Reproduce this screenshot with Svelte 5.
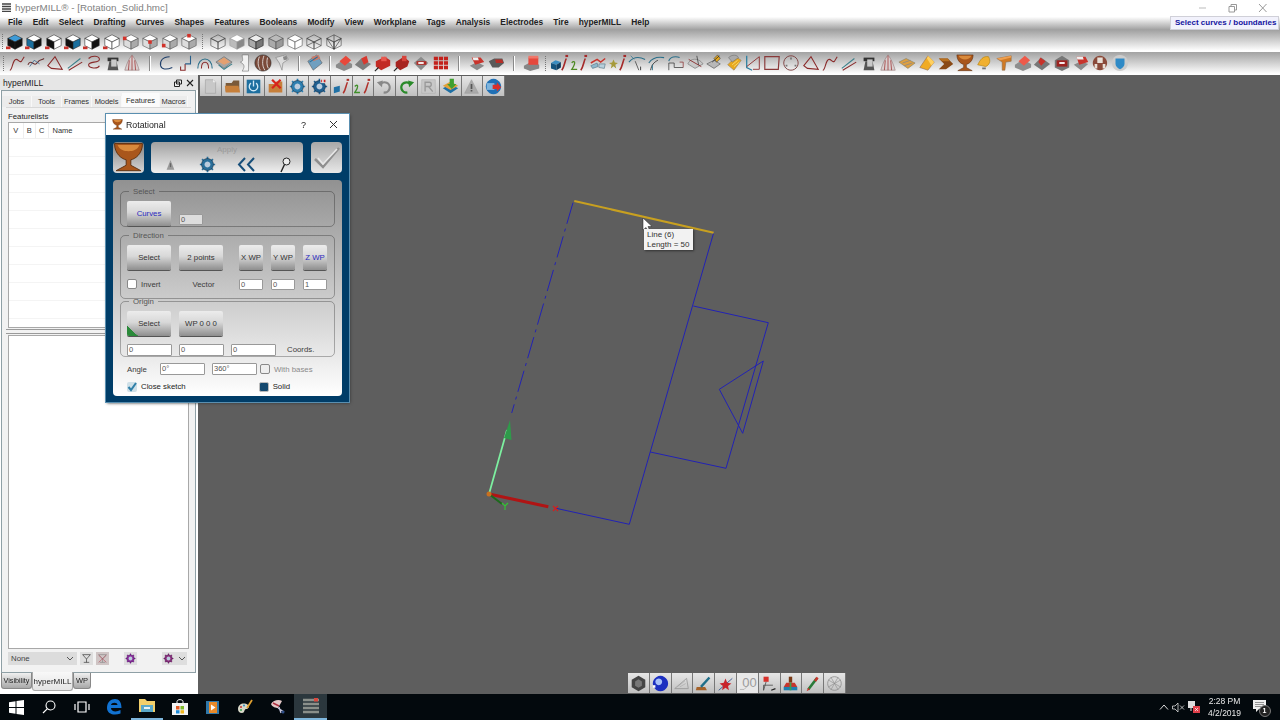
<script lang="ts">
	type Part = [string, string, string?, number?];

	const L = (d: string, c = '#8a2b2b', w = 1.2): Part => [d, 'none', c, w];
	const F = (d: string, c: string, s = 'none', w = 0.6): Part => [d, c, s, w];

	const cube = (t: string, l: string, r: string, e = '#222'): Part[] => [
		F('M10 2L18 6L10 10L2 6Z', t, e),
		F('M2 6L10 10V18L2 14Z', l, e),
		F('M18 6L10 10V18L18 14Z', r, e)
	];
	const view = (t: string, l: string, r: string): Part[] => [
		...cube(t, l, r),
		F('M0 15h5v3H0z', '#c8332c')
	];
	const corner = (x: number, y: number): Part[] => [
		...cube('#fff', '#ddd', '#aaa', '#444'),
		F(`M${x - 2} ${y - 2}h4v4h-4z`, '#d2322a')
	];
	const solid = (a: string, b: string): Part[] => [
		F('M1 12L10 6L19 11V15L10 19L1 15Z', b),
		F('M5 8L12 2L18 7L11 13Z', a)
	];
	const info = (tag: Part[], c = '#a52a2a'): Part[] => [...tag, L('M12 18C15 14 15 9 17 5', c, 1.8), F('M16 1h3v2.4h-3z', c)];
	const goblet: Part[] = [
		F('M1 1H19C19 8 14 11 11.500 11.500V15L18 18.500H2L8.500 15V11.500C6 11 1 8 1 1Z', '#a9561b', '#5b2f10'),
		F('M3 2H17C16 5 13 6 10 6C7 6 4 5 3 2Z', '#d98a3c')
	];
	const grid: Part[] = [0, 1, 2].flatMap((r) =>
		[0, 1, 2].map((c): Part => F(`M${2 + c * 5.6} ${3 + r * 5}h4.6v4h-4.6z`, '#c3211c'))
	);
	const gear = (c: string): Part[] => [
		L('M10 1V19M1 10H19M3.6 3.6L16.4 16.4M16.4 3.6L3.6 16.4', c, 2),
		F('M10 3A7 7 0 1 1 9.9 3Z', c, '#123'),
		F('M10 6.5A3.5 3.5 0 1 1 9.9 6.5Z', '#bcd')
	];

	const sep = (w: number, dotted = false) => ({ w, sep: true, dotted, g: [] as Part[] });
	const tool = (g: Part[]) => ({ w: 19.3, sep: false, dotted: false, g });

	const bar_one = [
		sep(5.5, true),
		...[
			view('#3d9bd8', '#111', '#111'),
			view('#fff', '#1a6f9e', '#111'),
			view('#fff', '#111', '#fff'),
			view('#fff', '#111', '#1a6f9e'),
			view('#fff', '#fff', '#111'),
			view('#fff', '#fff', '#fff'),
			corner(3, 6),
			corner(10, 10),
			corner(3, 14),
			corner(10, 3)
		].map(tool),
		sep(9.7, true),
		...[
			cube('none', 'none', 'none', '#333'),
			cube('#fff', '#bbb', '#888', '#999'),
			cube('#eee', '#aaa', '#777', '#111'),
			cube('#bbb', '#aaa', '#999', '#444'),
			cube('#fff', '#fff', '#fff', '#444'),
			[...cube('none', 'none', 'none', '#333'), L('M2 14L10 10L18 14', '#333', 0.7)],
			[...cube('none', 'none', 'none', '#333'), L('M2 6L10 18L18 6M10 2V18', '#333', 0.7)]
		].map(tool)
	];

	const bar_two = [
		sep(7, true),
		...[
			[L('M2 18C5 18 5 6 9 6C12 6 12 10 15 8L18 3')],
			[L('M1 12C5 4 8 16 12 9C14 6 16 7 19 5', '#6a3030'), L('M3 14L8 7L14 11', '#2a5f8a', 0.8)],
			[L('M2 13L10 3L18 17L6 16Z')],
			[L('M2 16L16 5', '#3a7f8a'), L('M3 18L18 9', '#8a2b2b')],
			[L('M4 5C8 1 16 2 16 6C16 10 4 8 4 12C4 16 14 17 16 13')],
			[F('M4 4H16V8H4z', '#333'), F('M6 8H14L16 18H4Z', '#555'), F('M8 6H14V14H8z', '#c9c9c9')],
			[F('M10 1C14 6 17 14 18 18H2C3 14 6 6 10 1Z', '#d9cfcf', '#8a6a6a'), L('M10 2V18M7 7L6 18M13 7L14 18', '#9a2b2b', 0.8)],
		].map(tool),
		sep(14.7),
		...[
			[L('M14 3C6 3 3 8 4 13C5 17 10 18 17 15', '#1f3f6a')],
			[L('M4 14V18H9V11', '#8a2b2b'), L('M9 11H15V2', '#2a5f8a')],
			[L('M2 16C2 2 18 2 18 16', '#2a6f8a'), L('M6 16C6 7 14 7 14 16', '#8a2b2b')],
			[F('M1 9L10 3L19 9L10 16Z', '#a5a5a5', '#555'), F('M3 8L10 4L17 9L10 12Z', '#e4a070'), L('M4 12L10 17L19 11', '#3a7f8a')],
			[F('M8 1H15V19H8C11 14 11 12 6 9C10 8 8 5 8 1Z', '#f2f2f2', '#666')],
			[F('M10 1A9 9 0 1 1 9.9 1Z', '#7a4a3a', '#222'), L('M6 3C4 8 4 13 7 18M11 2C9 8 9 13 12 18M15 4C14 8 14 13 16 16', '#eee', 0.9)],
			[F('M3 4L14 1L17 6L11 10L10 18L7 10Z', '#dcdcdc', '#777'), F('M11 3L15 2L16 6L12 7Z', '#888')],
		].map(tool),
		sep(13.7),
		tool([F('M2 8L12 1L18 10L8 18Z', '#6f9fc0', '#555'), F('M6 3L14 1L16 5L8 8Z', '#c77b6a'), L('M4 9L13 3', '#2a6f9a')]),
		sep(9.7),
		...[
			solid('#e8483a', '#8b8b8b'),
			[F('M1 12L8 5L19 11L10 18Z', '#7d7d7d'), F('M8 5L14 2L16 9L11 12Z', '#d8392f')],
			[F('M2 8L12 3L18 7V13L8 18L2 14Z', '#c22b25'), F('M8 3H14V8H8z', '#e8584f'), L('M1 19L5 15', '#222')],
			[F('M3 9L12 3L18 8L16 14L8 18L3 14Z', '#a72420'), F('M10 2H15V8H10z', '#d8443c'), L('M1 19L5 15', '#222')],
			[F('M2 10L10 3L18 10L10 18Z', '#8b8b8b'), F('M5 8H16V12H5z', '#b02a25'), F('M7 9H13V11H7z', '#fff')],
			grid
		].map(tool),
		sep(16.7),
		...[
			[F('M2 13L10 9L18 13L10 18Z', '#8b8b8b'), F('M4 4H14L18 9L8 12Z', '#c8342c'), F('M5 4H11L12 7H6Z', '#eee')],
			[F('M2 8L8 5H17L19 10L13 15H6Z', '#5a5a5a'), F('M9 6H17L18 10H10Z', '#b82e27')]
		].map(tool),
		sep(16.7),
		tool([F('M1 13L10 8L18 12V16L8 19L1 16Z', '#868686'), F('M6 4H17V12H6z', '#e5483c'), F('M6 2H17V5H6z', '#f0776a')]),
		sep(8.7, true),
		...[
			info([F('M5 7L11 9L6 12L0 10Z', '#3a8cc0'), F('M0 10L6 12V18L0 16Z', '#14537e'), F('M11 9L6 12V18L11 15Z', '#0f3f63')]),
			info([L('M2 10C4 7 8 8 2 17H8', '#4f8a24', 1.5)]),
			[F('M2 10L9 6L13 9L18 5', 'none', '#c8342c', 1.6), F('M2 13L9 10L10 14L4 16Z', '#8fb8cc', '#467'), F('M11 11L18 11L17 16L11 15Z', '#b8d0dc', '#467')],
			info([F('M5 6L6.5 9.5L10 10L7 12L8 16L5 13.5L2 16L3 12L0 10L3.5 9.5Z', '#a69a3a')]),
			[L('M1 9C6 3 13 3 19 6', '#2a6f8a'), L('M8 8L12 18', '#333', 0.8), L('M7 6L3 2', '#2a6f8a', 0.8), L('M14 14V18', '#333', 1)],
			[L('M2 10C6 4 13 3 19 4', '#2a6f8a'), L('M4 18C5 12 8 9 12 7', '#333', 1), L('M6 18V12', '#2a6f8a', 1)],
			[L('M2 8C3 3 10 2 14 4', '#2a6f8a'), L('M2 18V10H8V15H18', '#333', 0.8), L('M14 9H18V15', '#8a2b2b', 0.8)],
			[F('M2 11C5 4 14 4 19 11L10 16Z', '#c8c8c8', '#666'), L('M3 6L17 14', '#8a2b2b', 1), L('M12 2L14 12', '#333', 0.8)],
			[F('M2 11L10 7L17 11L10 16Z', '#b8b8b8', '#444'), F('M10 5L14 1L17 5L13 9Z', '#e5a81e', '#333'), L('M8 9L16 2', '#222', 0.8)],
			[F('M3 12L12 3L18 7L10 18Z', '#e8a91e', '#876'), F('M4 4C8 0 14 1 15 4L8 9Z', '#aaa', '#666'), L('M8 12L14 7M10 14L16 9', '#fff0a0', 0.7)],
			[L('M3 2V15L9 18', '#2a7fa0', 1.4), L('M3 14L17 3V17H10', '#8a2b2b', 1)],
			[L('M2 3H18L17 17H2Z', '#8a3a3a', 1.3)],
			[L('M10 2A8 8 0 1 1 9.9 2Z', '#7a3a3a', 1), F('M9 4h2v2h-2zM4 12h2v2H4zM14 12h2v2h-2z', '#777')],
			[L('M2 13L10 3L18 17L6 16Z')],
			[L('M2 18C5 18 5 6 9 6C12 6 12 10 15 8L18 3')],
			[L('M2 16L16 5', '#3a7f8a'), L('M3 18L18 9', '#8a2b2b')],
			[F('M4 4H16V8H4z', '#333'), F('M6 8H14L16 18H4Z', '#555'), F('M8 6H14V14H8z', '#c9c9c9')],
			[F('M10 1C14 6 17 14 18 18H2C3 14 6 6 10 1Z', '#d9cfcf', '#8a6a6a'), L('M10 2V18M7 7L6 18M13 7L14 18', '#9a2b2b', 0.8)],
			[F('M1 9L9 5L19 10L11 16Z', '#dfa040', '#776'), L('M5 10L14 7M7 13L16 10', '#888', 0.9)],
			[F('M2 15L11 2L18 9L11 18Z', '#f0ab24', '#865'), F('M11 2L18 9L15 13L10 5Z', '#ffd060')],
			[F('M2 5H12L18 11L10 17H2L8 11Z', '#8a4a16'), F('M2 5H12L14 8H6Z', '#b8701f')],
			goblet,
			[F('M3 12C6 6 9 2 15 3C18 8 16 12 12 14Z', '#f0b030', '#a70'), F('M8 15h4v2H8z', '#777')],
			[F('M2 5L18 2V8L12 9L11 18H8L8 9Z', '#d07a25', '#864'), F('M2 5L18 2V4L6 7Z', '#f0a050')],
			solid('#ee5a4a', '#8e8e8e'),
			[F('M1 12L9 4L19 11L10 18Z', '#777'), F('M8 4L14 8L9 13L6 9Z', '#c8322a')],
			[F('M10 2L18 7V15L10 19L2 15V7Z', '#777'), F('M4 7H16V14H4z', '#9c2320'), F('M7 9H13V11H7z', '#fff')],
			[F('M2 12L10 8L18 11L10 18Z', '#8b8b8b'), F('M5 3H15L18 9L8 12Z', '#c8342c'), F('M5 3H12L13 6H6Z', '#eee')],
			[F('M10 2A8 8 0 1 1 9.9 2Z', '#8a4a3a'), F('M7 4h6v6H7zM4 11h3v5H4zM13 11h3v5h-3z', '#e8e0d8')],
			[F('M10 1A9 9 0 1 1 9.9 1Z', '#ccc'), F('M5 5H15V11C15 14 12 16 10 17C8 16 5 14 5 11Z', '#2f8ac6')]
		].map(tool)
	];

	const top_tools: Part[][] = [
		[F('M4 2H13L16 5V18H4Z', '#c8c8c8', '#999'), F('M13 2V5H16Z', '#eee')],
		[F('M2 6H9L11 3H18V16H2Z', '#7a5a3a'), F('M1 9H17L19 17H2Z', '#c67f3a')],
		[F('M2 2H18V18H2Z', '#1d6f9f'), L('M7 6A5 5 0 1 0 13 6', '#cfe8f5', 1.6), L('M10 3V10', '#cfe8f5', 1.6)],
		[F('M2 7H9L11 4H18V17H2Z', '#c67f3a'), L('M6 2L16 12M16 2L6 12', '#d8241c', 2.6)],
		gear('#2d7fb0'),
		[...gear('#1f5f90'), F('M11 1h7v5h-7z', '#ddd'), F('M12 2h1v3h-1zM15 2h2v3h-2z', '#c22')],
		info([F('M1 11L8 9V16L1 18Z', '#1f70a5')], '#b0302a'),
		info([L('M1 10C3 7 7 8 1 17H7', '#3f8f2a', 1.6)], '#b0302a'),
		[L('M5 8A6 6 0 1 1 9 17', '#888', 2.6), F('M1 5L8 3L7 11Z', '#888')],
		[L('M15 8A6 6 0 1 0 11 17', '#2a8a2a', 2.8), F('M19 5L12 3L13 11Z', '#2a8a2a')],
		[F('M2 2H18V18H2Z', '#c8c8c8', '#aaa'), L('M6 16V5H11C14 5 14 10 11 10H6M10 10L15 16', '#999', 1.6)],
		[F('M1 12L10 7L19 12L10 18Z', '#1f70a5'), F('M1 9L10 4L19 9L10 14Z', '#e3a13a'), F('M9 1H14V7H17L11.5 13L6 7H9Z', '#3fa030')],
		[F('M10 2L18 18H2Z', '#aaa', '#999'), F('M9 7h2v6H9zM9 14h2v2H9z', '#555')],
		[F('M10 1A9 9 0 1 1 9.9 1Z', '#1f70b5'), F('M2 6H11V14H2Z', '#7fb4dc'), F('M9 8H14V5L19 11L14 16V13H9Z', '#d8302a')]
	];

	const bottom_tools: Part[][] = [
		[F('M10 1L18 5.5V14.5L10 19L2 14.5V5.5Z', '#444'), F('M10 5L14 7.5V12.5L10 15L6 12.5V7.5Z', '#777')],
		[F('M10 1A9 9 0 1 1 9.9 1Z', '#1c2fc0'), F('M8 4A4 4 0 1 1 7.9 4Z', '#a8c0f8'), F('M1 12h3v3H1z', '#fff')],
		[L('M2 16H18L16 4Z', '#9a9a9a', 1), L('M5 14L14 7M8 14L15 10', '#aaa', 0.8)],
		[F('M2 14H12L14 18H1Z', '#a5622a'), L('M7 14L17 3', '#1f6f8a', 2.8)],
		[L('M2 18L18 4', '#2a4f8a', 1), F('M10 4L12 9L17 10L13 13L14 18L10 15L6 18L7 13L3 10L8 9Z', '#c8242c')],
		[L('M1 17H6L11 12', '#aaa', 0.9)],
		[F('M3 2h6v6H3z', '#d8302a'), L('M6 8L3 18V12L14 12', '#444', 0.9), L('M12 18L17 16', '#222', 1.4)],
		[F('M8 2H12V9H8Z', '#7a3a16'), F('M5 9H15L18 14H2Z', '#c8342c'), F('M2 14H18V18H2Z', '#1f7fb0'), L('M10 9V18', '#3aa050', 2)],
		[L('M5 17L15 4', '#2a7a3a', 3), L('M13 7L16 3', '#c8342c', 3), F('M3 19L5 15L7 17Z', '#c8342c')],
		[L('M10 2A8 8 0 1 1 9.9 2Z', '#888', 0.9), L('M3 6L17 14M3 14L17 6M6 3L14 17M14 3L6 17', '#888', 0.7)]
	];

	const menus = ['File', 'Edit', 'Select', 'Drafting', 'Curves', 'Shapes', 'Features', 'Booleans', 'Modify', 'View', 'Workplane', 'Tags', 'Analysis', 'Electrodes', 'Tire', 'hyperMILL', 'Help'];
	const tabs = ['Jobs', 'Tools', 'Frames', 'Models', 'Features', 'Macros'];
	const dir_values = ['0', '0', '1'];
	const coords = ['0', '0', '0'];
	const empty_rows = Array.from({ length: 11 });
</script>

{#snippet ico(g: Part[], s: number = 18)}
	<svg class="ico" width={s} height={s} viewBox="0 0 20 20">
		{#each g as p}
			<path d={p[0]} fill={p[1]} stroke={p[2] ?? 'none'} stroke-width={p[3] ?? 0.8} />
		{/each}
	</svg>
{/snippet}

{#snippet strip(items: { w: number; sep: boolean; dotted: boolean; g: Part[] }[])}
	{#each items as it}
		{#if it.sep}
			<span class="sep" style="width: {it.w}px"><i class:dotted={it.dotted}></i></span>
		{:else}
			<span class="cell" style="width: {it.w}px">{@render ico(it.g)}</span>
		{/if}
	{/each}
{/snippet}

<div class="app">
	<header class="titlebar">
		<svg class="app-logo" width="9" height="9" viewBox="0 0 9 9">
			<path d="M0 1h9M0 3.500h9M0 6h9M0 8.500h9" stroke="#444" stroke-width="1.600" />
		</svg>
		<span class="app-name">hyperMILL® - [Rotation_Solid.hmc]</span>
		<div class="winctl">
			<svg width="12" height="10" viewBox="0 0 12 10"><path d="M2 5h7" stroke="#bbb" /></svg>
			<svg width="12" height="10" viewBox="0 0 12 10"><path d="M2 3.500h5.500v5.500H2zM4 3.500V1.500h5.500V7H7.500" fill="none" stroke="#999" /></svg>
			<svg width="12" height="10" viewBox="0 0 12 10"><path d="M2 1l7.500 8M9.500 1L2 9" stroke="#999" /></svg>
		</div>
	</header>

	<div class="chrome">
		<nav class="menu">
			{#each menus as m}<span>{m}</span>{/each}
		</nav>
		<div class="bar one">{@render strip(bar_one)}</div>
	</div>
	<div class="bar two">{@render strip(bar_two)}</div>

	<div class="main">
		<aside class="side">
			<div class="side-head">
				<span>hyperMILL</span>
				<div class="side-actions">
					<svg width="8" height="8" viewBox="0 0 8 8"><path d="M2.500 1h5v4h-5zM.5 3h5v4.500h-5z" fill="#f0f0f0" stroke="#222" /></svg>
					<svg width="8" height="8" viewBox="0 0 8 8"><path d="M1 1l6 6M7 1L1 7" stroke="#222" stroke-width="1.100" /></svg>
				</div>
			</div>
			<div class="frame">
				<div class="tabs">
					{#each tabs as t}<span class="tab" class:on={t === 'Features'}>{t}</span>{/each}
				</div>
				<div class="page">
					<div class="fl-label">Featurelists</div>
					<div class="listbox upper">
						<div class="list-head">
							<span class="c">V</span><span class="c">B</span><span class="c">C</span><span class="n">Name</span>
						</div>
						{#each empty_rows as _}<div class="row"></div>{/each}
					</div>
					<div class="splitter"></div>
					<div class="listbox lower"></div>
					<div class="side-tools">
						<div class="combo"><span>None</span><svg width="8" height="5" viewBox="0 0 8 5"><path d="M1 1l3 3 3-3" fill="none" stroke="#555" /></svg></div>
						<span class="mini">{@render ico([L('M3 3H17L10 11ZM10 11V17M5 17H15', '#333', 1.2)], 11)}</span>
						<span class="mini red">{@render ico([L('M3 3H17L10 11ZM10 11V17M5 17H15', '#888', 1.2), L('M3 4L17 17M17 4L3 17', '#b04050', 1)], 11)}</span>
						<span class="mini gap">{@render ico(gear('#8a2a9a'), 11)}</span>
						<span class="mini wide">{@render ico(gear('#8a2a7a'), 11)}<svg width="8" height="5" viewBox="0 0 8 5"><path d="M1 1l3 3 3-3" fill="none" stroke="#555" /></svg></span>
					</div>
				</div>
			</div>
			<div class="foot-tabs">
				<span class="ft vis">Visibility</span>
				<span class="ft on">hyperMILL</span>
				<span class="ft">WP</span>
			</div>
		</aside>

		<section class="viewport">
			<svg class="scene" viewBox="198 75 1082 619" width="1082" height="619">
				<g fill="none" stroke="#2222b4" stroke-width="1">
					<path d="M713.700 232.700L629.300 524.300L556 508.300" />
					<path d="M573 202.700L511.700 413" stroke-dasharray="22 5 3 5" />
					<path d="M693.300 306L768.300 322.700L726 468.300L650.300 452" />
					<path d="M763.300 361L719.300 389.300L742.700 433.300Z" />
					<path d="M497 465l-1 4" />
				</g>
				<path d="M574.300 201L713.700 232.700" stroke="#c8a020" stroke-width="2" />
				<path d="M489 494L507 430" stroke="#7df0a0" stroke-width="1.800" />
				<path d="M510 420L504 438L511.500 440Z" fill="#2f9a4a" />
				<path d="M489 494L548.300 506.700" stroke="#b01414" stroke-width="3" />
				<path d="M489 494L502 504" stroke="#1c6a1c" stroke-width="2" />
				<circle cx="489" cy="494" r="2.500" fill="#c8701f" />
				<path d="M553 506l5 5M558 506l-5 5" stroke="#d02020" stroke-width="1.300" />
				<path d="M502 503l3 3 3-3M505 506v4" fill="none" stroke="#32c832" stroke-width="1.100" />
				<path d="M643 218V230L646 227.500L648 232L650 231L648 226.500H652Z" fill="#fff" stroke="#222" stroke-width="0.500" />
			</svg>
			<div class="top-tools">
				{#each top_tools as g}<span class="vbtn">{@render ico(g, 17)}</span>{/each}
			</div>
			<div class="bottom-tools">
				{#each bottom_tools as g, i}
					<span class="vbtn" class:lit={i === 5}>
						{@render ico(g, 17)}
						{#if i === 5}<b class="zeros">00</b>{/if}
					</span>
				{/each}
			</div>
			<div class="tip">Line (6)<br />Length = 50</div>
		</section>
	</div>

	<footer class="taskbar">
		<div class="task-left">
			<span class="tb"><svg width="15" height="15" viewBox="0 0 15 15"><path d="M0 2.200L6.500 1.300V7H0zM7.500 1.100L15 0V7H7.500zM0 8H6.500V13.700L0 12.800zM7.500 8H15V15L7.500 13.900z" fill="#fff" /></svg></span>
			<span class="tb"><svg width="14" height="14" viewBox="0 0 14 14"><circle cx="8.500" cy="5.500" r="4.500" fill="none" stroke="#fff" stroke-width="1.100" /><path d="M5.200 8.800L1 13" stroke="#fff" stroke-width="1.200" /></svg></span>
			<span class="tb"><svg width="16" height="12" viewBox="0 0 16 12"><path d="M4 1h8v10H4zM1 3v6M15 3v6" fill="none" stroke="#fff" stroke-width="1.200" /></svg></span>
			<span class="tb"><svg width="16" height="16" viewBox="0 0 16 16"><path d="M1 9C1 3 5 0 9 0C13 0 15.500 3 15.500 9H5C5 12.500 10 13.500 14.500 11V14.500C8 17 1 15 1 9ZM5 6H11.500C11.500 3 5.500 3 5 6Z" fill="#1273d2" /></svg></span>
			<span class="tb active-line"><svg width="16" height="14" viewBox="0 0 16 14"><path d="M0 0H6L8 2H16V13H0Z" fill="#f2cf6a" /><path d="M2 6H14V13H2Z" fill="#5aa8c8" /><path d="M5 8H11V10H5Z" fill="#e8f4f8" /></svg></span>
			<span class="tb"><svg width="16" height="16" viewBox="0 0 16 16"><path d="M5 4V2.500C5 0 11 0 11 2.500V4" fill="none" stroke="#fff" /><path d="M0 4H16V16H0Z" fill="#f4f4f4" /><path d="M4 7H7.500V10.500H4z" fill="#e25a26" /><path d="M8.500 7H12V10.500H8.500z" fill="#7fba2a" /><path d="M4 11.200H7.500V14.500H4z" fill="#1c8ad8" /><path d="M8.500 11.200H12V14.500H8.500z" fill="#f2b81e" /></svg></span>
			<span class="tb"><svg width="13" height="15" viewBox="0 0 13 15"><path d="M0 1H13V14H0Z" fill="#2f77a8" /><path d="M3 2H11V13H3Z" fill="#e88a2a" /><path d="M5 4.500L9.500 7.500L5 10.500Z" fill="#fff" /></svg></span>
			<span class="tb"><svg width="16" height="16" viewBox="0 0 16 16"><path d="M1 10C1 5 7 3 11 6C13 8 11 10 9 10C7 10 8 14 5 14C2 14 1 12 1 10Z" fill="#d8d8c8" /><circle cx="4" cy="8" r="1" fill="#c83030" /><circle cx="7" cy="6.500" r="1" fill="#2f8ac0" /><circle cx="4" cy="11" r="1" fill="#3aa050" /><path d="M10 9L15 1" stroke="#e0a030" stroke-width="1.800" /></svg></span>
			<span class="tb"><svg width="16" height="16" viewBox="0 0 16 16"><path d="M1 5C3 1 9 0 12 2L8 9C6 9 2 8 1 5Z" fill="#e4c8c8" /><path d="M3 4L9 7" stroke="#b03040" stroke-width="1.400" /><path d="M8 9L14 13M9 8L11 14" stroke="#c8c8e0" stroke-width="1.300" /><circle cx="13" cy="13" r="1.500" fill="#30508a" /></svg></span>
			<span class="tb current"><svg width="16" height="16" viewBox="0 0 16 16"><path d="M0 2h16M0 6h16M0 10h16M0 14h16" stroke="#8a8f8a" stroke-width="2.600" /><path d="M11 0h4v3.500h-4z" fill="#d84a40" /></svg></span>
		</div>
		<div class="tray">
			<svg width="10" height="6" viewBox="0 0 10 6"><path d="M1 5.500L5 1l4 4.500" fill="none" stroke="#ddd" /></svg>
			<svg width="13" height="11" viewBox="0 0 13 11"><path d="M0.500 4H3L6 1V10L3 7H0.500Z" fill="none" stroke="#ddd" stroke-width="0.800" /><path d="M8 3.500l4 4M12 3.500l-4 4" stroke="#ddd" stroke-width="0.800" /></svg>
			<svg width="12" height="12" viewBox="0 0 12 12"><path d="M0 0H7V7H0z" fill="#ddd" /><path d="M3 7V10" stroke="#ddd" /><path d="M5 5h7v7H5z" fill="#e0404a" /><path d="M7 7l3 3M10 7l-3 3" stroke="#fff" stroke-width="0.700" /></svg>
			<div class="clock"><span>2:28 PM</span><span>4/2/2019</span></div>
			<span class="notif">
				<svg width="13" height="12" viewBox="0 0 13 12"><path d="M0 0H13V9H6L3 12V9H0Z" fill="#eee" /><path d="M2 2.500H11M2 4.500H11M2 6.500H8" stroke="#555" stroke-width="0.600" /></svg>
				<b>1</b>
			</span>
		</div>
	</footer>

	<div class="select-hint">Select curves / boundaries</div>

	<div class="dialog">
		<div class="dlg-title">
			{@render ico(goblet, 11)}
			<span class="dlg-name">Rotational</span>
			<span class="dlg-help">?</span>
			<svg width="9" height="9" viewBox="0 0 9 9"><path d="M1 1l7 7M8 1L1 8" stroke="#333" /></svg>
		</div>
		<div class="dlg-body">
			<div class="dlg-top">
				<div class="big-ico">{@render ico(goblet, 31)}</div>
				<div class="apply">
					<span class="apply-label">Apply</span>
					<div class="apply-icons">
						{@render ico([F('M10 3L16 18H4Z', '#999'), F('M9 8h2v6H9z', '#666')], 13)}
						{@render ico(gear('#2a6f9a'), 17)}
						<svg width="19" height="15" viewBox="0 0 19 15"><path d="M8 1L2 7.500L8 14M17 1L11 7.500L17 14" fill="none" stroke="#174f7a" stroke-width="2" /></svg>
						<svg width="13" height="16" viewBox="0 0 13 16"><circle cx="8.500" cy="4.500" r="3.500" fill="#eee" stroke="#222" /><path d="M6.500 7.500L3 15" stroke="#222" stroke-width="1.400" /></svg>
					</div>
				</div>
				<div class="check">
					<svg width="28" height="24" viewBox="0 0 28 24"><path d="M2 13L10 21L26 2" fill="none" stroke="#8f8f8f" stroke-width="2.500" /><path d="M5 12L10 18L24 3" fill="none" stroke="#e8e8e8" stroke-width="1.500" /></svg>
				</div>
			</div>
			<div class="panel">
				<fieldset class="sel">
					<legend>Select</legend>
					<div class="line bottom">
						<button class="btn wide blue">Curves</button>
						<span class="input tiny gray">0</span>
					</div>
				</fieldset>
				<fieldset class="dir">
					<legend>Direction</legend>
					<div class="line">
						<button class="btn wide">Select</button>
						<button class="btn wide">2 points</button>
						<div class="wps">
							<button class="btn narrow">X WP</button>
							<button class="btn narrow">Y WP</button>
							<button class="btn narrow blue">Z WP</button>
						</div>
					</div>
					<div class="line vec">
						<label class="chk"><i class="box"></i>Invert</label>
						<span class="vec-label">Vector</span>
						<div class="wps inputs">
							{#each dir_values as v}<span class="input small">{v}</span>{/each}
						</div>
					</div>
				</fieldset>
				<fieldset class="org">
					<legend>Origin</legend>
					<div class="line">
						<button class="btn wide marked">Select</button>
						<button class="btn wide">WP 0 0 0</button>
					</div>
					<div class="line coords">
						{#each coords as v}<span class="input wide-in">{v}</span>{/each}
						<span class="coord-label">Coords.</span>
					</div>
				</fieldset>
				<div class="angle">
					<span class="angle-label">Angle</span>
					<span class="input ang">0°</span>
					<span class="input ang">360°</span>
					<label class="chk muted"><i class="box sm"></i>With bases</label>
				</div>
				<div class="opts">
					<label class="chk"><i class="box tick">
						<svg width="10" height="10" viewBox="0 0 10 10"><path d="M1.500 5L4 8L9 1" fill="none" stroke="#2f7fa8" stroke-width="2" /></svg>
					</i>Close sketch</label>
					<label class="chk"><i class="box solid"></i>Solid</label>
				</div>
			</div>
		</div>
	</div>
</div>

<style>
	:global(body) {
		margin: 0;
		background: #5e5e5e;
	}

	.app {
		position: relative;
		display: flex;
		flex-direction: column;
		width: 1280px;
		height: 720px;
		overflow: hidden;
		font-family: 'Liberation Sans', Arial, sans-serif;
		font-size: 8.5px;
		color: #222;
		filter: blur(0.3px);
	}

	.titlebar {
		display: flex;
		align-items: center;
		flex: none;
		height: 15px;
		padding-left: 2px;
		background: #fff;
	}
	.app-name {
		margin-left: 4px;
		color: #808080;
		font-size: 9.800px;
	}
	.winctl {
		display: flex;
		gap: 18px;
		margin-left: auto;
		padding-right: 11px;
	}

	.chrome {
		flex: none;
		height: 37px;
		background: linear-gradient(#fff 0, #fff 5%, #a0a0a0 40%, #fff 97%);
	}
	.menu {
		display: flex;
		gap: 10.200px;
		box-sizing: border-box;
		height: 16px;
		align-items: center;
		padding: 0 0 2px 8px;
		font-weight: 700;
		color: #222;
		font-size: 8.400px;
	}
	.bar {
		display: flex;
		align-items: center;
	}
	.bar.one {
		height: 21px;
	}
	.bar.two {
		box-sizing: border-box;
		flex: none;
		height: 23px;
		padding-bottom: 1px;
		background: linear-gradient(#a2a2a2, #fff 95%);
	}
	.cell {
		display: flex;
		flex: none;
		justify-content: center;
	}
	.sep {
		display: flex;
		flex: none;
		justify-content: center;
	}
	.sep i {
		width: 1px;
		height: 15px;
		background: #8a8a8a;
		box-shadow: 1px 0 #fff;
	}
	.sep i.dotted {
		background: none;
		border-left: 1px dotted #777;
		box-shadow: none;
	}
	.ico {
		display: block;
		flex: none;
	}

	.main {
		display: flex;
		flex: 1;
		min-height: 0;
	}

	.side {
		display: flex;
		flex-direction: column;
		flex: none;
		width: 198px;
		background: #fff;
	}
	.side-head {
		display: flex;
		align-items: center;
		flex: none;
		height: 15px;
		padding: 0 4px 0 3px;
		background: #e6e6e6;
		font-size: 8.500px;
	}
	.side-actions {
		display: flex;
		gap: 4px;
		margin-left: auto;
	}
	.frame {
		display: flex;
		flex-direction: column;
		box-sizing: border-box;
		flex: none;
		width: 195px;
		height: 583px;
		margin-left: 1px;
		padding: 4px 4px 6px;
		border: 1px solid #8fa0a6;
		background: #f2f2f2;
	}
	.tabs {
		display: flex;
		flex: none;
		height: 12px;
		margin-left: -4px;
		align-items: flex-end;
	}
	.tab {
		display: flex;
		align-items: center;
		justify-content: center;
		flex: none;
		box-sizing: border-box;
		height: 11px;
		width: 30px;
		background: #ececec;
		border-right: 1px solid #f8f8f8;
		font-size: 7.500px;
		letter-spacing: -0.100px;
		color: #333;
	}
	.tab.on {
		height: 14px;
		width: 38px;
		background: #fbfbfb;
	}
	.tab:last-child {
		width: 28px;
	}
	.page {
		display: flex;
		flex-direction: column;
		flex: 1;
		min-height: 0;
		padding: 3px 2px 0;
		border-top: 1px solid #d8d8d8;
	}
	.fl-label {
		flex: none;
		height: 11px;
		line-height: 11px;
		font-size: 7.800px;
	}
	.listbox {
		box-sizing: border-box;
		background: #fff;
		border: 1px solid #a8a8a8;
		overflow: hidden;
	}
	.upper {
		flex: none;
		height: 206px;
	}
	.list-head {
		display: flex;
		height: 15px;
		align-items: center;
		border-bottom: 1px solid #f0f0f0;
		font-size: 7.500px;
		color: #333;
	}
	.list-head .c {
		width: 12.500px;
		height: 100%;
		line-height: 15px;
		text-align: center;
		border-right: 1px solid #eee;
		box-sizing: border-box;
	}
	.list-head .c:first-child {
		width: 14.500px;
	}
	.list-head .n {
		padding-left: 4px;
	}
	.row {
		height: 17px;
		border-bottom: 1px solid #f4f4f4;
	}
	.splitter {
		flex: none;
		height: 3px;
		margin: 1px -2px 1px;
		border-top: 1px solid #9a9a9a;
		border-bottom: 1px solid #9a9a9a;
	}
	.lower {
		flex: 1;
		min-height: 0;
	}
	.side-tools {
		display: flex;
		align-items: center;
		flex: none;
		height: 15px;
		margin-top: 2px;
		gap: 3px;
	}
	.combo {
		display: flex;
		align-items: center;
		justify-content: space-between;
		box-sizing: border-box;
		width: 69px;
		height: 13px;
		padding: 0 3px;
		background: #dcdcdc;
		color: #444;
		font-size: 7.800px;
	}
	.mini {
		display: flex;
		align-items: center;
		justify-content: center;
		gap: 4px;
		width: 13px;
		height: 13px;
		background: #dedede;
	}
	.mini.red {
		background: #cfc5c5;
	}
	.mini.gap {
		margin-left: 12px;
	}
	.mini.wide {
		margin-left: 22px;
		width: 25px;
	}
	.foot-tabs {
		display: flex;
		flex: 1;
		align-items: flex-start;
		padding-left: 1px;
	}
	.ft {
		display: flex;
		align-items: center;
		justify-content: center;
		box-sizing: border-box;
		padding: 0 2px;
		height: 16px;
		min-width: 16px;
		background: linear-gradient(#f0f0f0, #a8a8a8);
		border: 1px solid #888;
		border-top: none;
		border-radius: 0 0 3px 3px;
		font-size: 7.500px;
	}
	.ft.vis {
		width: 31px;
		padding: 0;
		font-size: 7.200px;
	}
	.ft.on {
		height: 19px;
		width: 41px;
		margin-top: -1px;
		background: linear-gradient(#f8f8f8, #e4e4e4);
		border-color: #aaa;
		font-size: 8px;
	}

	.viewport {
		position: relative;
		flex: 1;
		background: #5e5e5e;
	}
	.scene {
		position: absolute;
		inset: 0;
	}
	.top-tools,
	.bottom-tools {
		position: absolute;
		display: flex;
	}
	.top-tools {
		left: 2px;
		top: 1px;
	}
	.bottom-tools {
		left: 430px;
		bottom: 1px;
	}
	.vbtn {
		position: relative;
		display: flex;
		align-items: center;
		justify-content: center;
		box-sizing: border-box;
		width: 21.800px;
		height: 20px;
		background: linear-gradient(#e6e6e6, #c0c0c0);
		border-right: 1px solid #777;
	}
	.vbtn.lit {
		background: #e8e8e8;
	}
	.zeros {
		position: absolute;
		right: 1px;
		top: 2px;
		font-size: 13px;
		font-weight: 400;
		color: #9c9c9c;
	}
	.tip {
		position: absolute;
		left: 446px;
		top: 154px;
		box-sizing: border-box;
		width: 49px;
		height: 21px;
		padding: 1px 3px;
		background: #f2f2f2;
		box-shadow: 1px 1px 2px #333;
		font-size: 8px;
		line-height: 10px;
		color: #333;
	}

	.taskbar {
		display: flex;
		justify-content: space-between;
		flex: none;
		height: 26px;
		background: #03090d;
	}
	.task-left {
		display: flex;
	}
	.tb {
		display: flex;
		align-items: center;
		justify-content: center;
		box-sizing: border-box;
		width: 32.700px;
		height: 26px;
	}
	.active-line {
		border-bottom: 2px solid #7eb6dc;
	}
	.current {
		background: #2b373d;
		border-bottom: 2px solid #7eb6dc;
	}
	.tray {
		display: flex;
		align-items: center;
		gap: 3px;
		padding-right: 14.500px;
	}
	.clock {
		display: flex;
		flex-direction: column;
		align-items: center;
		width: 44px;
		color: #e8e8e8;
		font-size: 8.500px;
		line-height: 12px;
	}
	.notif {
		position: relative;
		display: block;
		margin-left: 3px;
	}
	.notif b {
		position: absolute;
		right: -5px;
		bottom: -3px;
		width: 10px;
		height: 10px;
		line-height: 10px;
		border-radius: 50%;
		background: #222;
		border: 1px solid #777;
		color: #fff;
		font-size: 7px;
		text-align: center;
	}

	.select-hint {
		position: absolute;
		right: 1px;
		top: 16px;
		box-sizing: border-box;
		width: 109px;
		height: 14px;
		line-height: 12px;
		padding-left: 4px;
		background: #f2f2fc;
		border: 1px solid #d0d0d8;
		color: #1414a0;
		font-weight: 700;
		font-size: 8px;
		white-space: nowrap;
	}

	.dialog {
		position: absolute;
		left: 106px;
		top: 114px;
		width: 243px;
		height: 288px;
		box-sizing: border-box;
		display: flex;
		flex-direction: column;
		box-shadow: 0 0 0 1px #5a8fb0, 1px 1px 3px #333;
		background: #003d68;
	}
	.dlg-title {
		display: flex;
		align-items: center;
		flex: none;
		height: 21px;
		padding: 0 11px 0 6px;
		background: #fff;
	}
	.dlg-name {
		margin-left: 3px;
		font-size: 8.800px;
		color: #222;
	}
	.dlg-help {
		margin-left: auto;
		margin-right: 23px;
		font-size: 9px;
	}
	.dlg-body {
		display: flex;
		flex-direction: column;
		flex: 1;
		padding: 7px 7px 6px;
		gap: 7px;
	}
	.dlg-top {
		display: flex;
		flex: none;
		height: 31px;
		gap: 7px;
	}
	.big-ico,
	.check {
		display: flex;
		align-items: center;
		justify-content: center;
		flex: none;
		width: 31px;
		height: 31px;
		border-radius: 4px;
		background: linear-gradient(#a8a8a8, #e8e8e8);
	}
	.check {
		margin-left: 1px;
	}
	.big-ico {
		background: linear-gradient(#808080, #d8d8d8);
	}
	.apply {
		display: flex;
		flex-direction: column;
		flex: 1;
		border-radius: 4px;
		background: linear-gradient(#a0a0a0, #f0f0f0);
	}
	.apply-label {
		margin-top: 3px;
		text-align: center;
		color: #9a9a9a;
		font-size: 8px;
		line-height: 10px;
	}
	.apply-icons {
		display: flex;
		align-items: center;
		padding: 1px 12px 0 13px;
		justify-content: space-between;
	}
	.panel {
		display: flex;
		flex-direction: column;
		flex: 1;
		box-sizing: border-box;
		padding: 7px 7px 0;
		border-radius: 4px;
		background: linear-gradient(#919191, #dcdcdc 70%, #fff);
		font-size: 7.800px;
		color: #3c3c3c;
	}
	fieldset {
		box-sizing: border-box;
		flex: none;
		margin: 0;
		padding: 5px 6px 0;
		min-width: 0;
		border: 1px solid rgba(0, 0, 0, 0.28);
		border-radius: 5px;
	}
	legend {
		margin-left: 2px;
		padding: 0 4px;
		font-size: 7.800px;
		line-height: 9px;
		color: #555;
	}
	.sel {
		height: 40px;
	}
	.dir {
		height: 68.500px;
		margin-top: 3.500px;
	}
	.org {
		height: 60px;
		margin-top: -2.500px;
	}
	.line {
		display: flex;
		align-items: center;
		gap: 8px;
	}
	.line.bottom {
		align-items: flex-end;
	}
	.btn {
		box-sizing: border-box;
		flex: none;
		height: 25px;
		padding: 0;
		border: none;
		border-radius: 2px;
		background: linear-gradient(#ececec, #d8d8d8 45%, #8e8e8e);
		box-shadow: 0 1px #555;
		font: inherit;
		font-size: 7.800px;
		color: #333;
	}
	.btn.wide {
		width: 44px;
	}
	.btn.narrow {
		width: 24px;
	}
	.btn.blue {
		color: #2a2ac0;
	}
	.btn.marked {
		background:
			linear-gradient(to top right, #2a8a3a 50%, transparent 51%) left bottom / 11px 10px no-repeat,
			linear-gradient(#ececec, #d8d8d8 45%, #8e8e8e);
	}
	.wps {
		display: flex;
		gap: 8px;
		margin-left: 8px;
	}
	.wps.inputs {
		margin-left: auto;
	}
	.vec {
		height: 11px;
		margin-top: 9px;
	}
	.vec-label {
		margin-left: 24px;
	}
	.inputs {
		padding-right: 1px;
	}
	.input {
		display: block;
		box-sizing: border-box;
		flex: none;
		height: 11px;
		line-height: 9px;
		padding-left: 1px;
		background: #fff;
		border: 1px solid #999;
		border-radius: 1px;
		font-size: 7.500px;
		color: #555;
	}
	.tiny {
		width: 24px;
		margin-bottom: 1px;
	}
	.gray {
		background: #ddd;
	}
	.small {
		width: 24px;
	}
	.coords {
		margin-top: 8px;
		gap: 8px;
	}
	.wide-in {
		width: 45px;
		height: 12px;
		margin-right: -1px;
	}
	.coord-label {
		margin-left: 4px;
	}
	.chk {
		display: flex;
		align-items: center;
		gap: 4px;
	}
	.box {
		display: block;
		box-sizing: border-box;
		width: 10px;
		height: 10px;
		background: #fff;
		border: 1px solid #888;
		border-radius: 2px;
	}
	.box.sm {
		background: #eee;
	}
	.box.tick {
		background: #cfe0e8;
		border: none;
	}
	.box.solid {
		background: #14486e;
		border: 1px solid #bbb;
	}
	.muted {
		color: #8a8a8a;
	}
	.angle {
		display: flex;
		align-items: center;
		flex: none;
		height: 12px;
		margin-top: 6.600px;
		padding-left: 7px;
		gap: 7px;
	}
	.angle-label {
		width: 26px;
	}
	.ang {
		width: 45px;
		height: 12px;
		line-height: 10px;
	}
	.angle .muted {
		margin-left: -4px;
	}
	.opts {
		display: flex;
		align-items: center;
		justify-content: space-between;
		flex: none;
		height: 11px;
		margin-top: 6px;
		padding: 0 45px 0 7px;
		color: #222;
	}
</style>
